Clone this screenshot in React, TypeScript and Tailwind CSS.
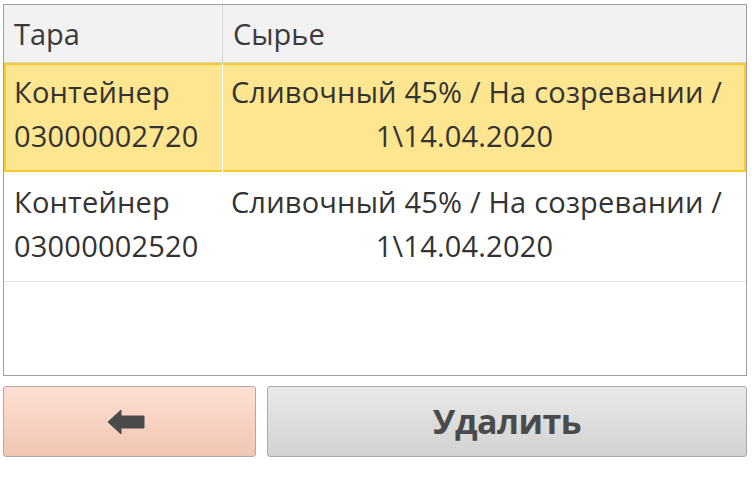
export default function App() {
  const font = { fontFamily: '"Open Sans", "Noto Sans", sans-serif' };
  return (
    <div className="w-[752px] h-[483px] bg-white pl-[3px] pt-[4px] text-[#333333]" style={font}>
      {/* Table */}
      <div className="w-[744px] h-[372px] border border-[#a0a0a0] flex flex-col">
        <div className="h-[58px] bg-[#f2f2f2] border-b border-[#d6d6d6] flex text-[29px] leading-[44px] text-[#3a3a3a]">
          <div className="w-[219px] border-r border-[#d6d6d6] pl-[10px] flex items-center">Тара</div>
          <div className="flex-1 pl-[10px] flex items-center">Сырье</div>
        </div>

        <div className="h-[109px] bg-[#fee58f] shadow-[inset_0_0_0_2px_#f8cb2c] flex text-[29px] leading-[44px] tracking-[0.2px]">
          <div className="w-[219px] border-r border-white pl-[10px] pt-[7px]">
            <div>Контейнер</div>
            <div>03000002720</div>
          </div>
          <div className="flex-1 pt-[7px] pr-[16px] text-center">
            <div>Сливочный 45% / На созревании /</div>
            <div className="pr-[24px]">1\14.04.2020</div>
          </div>
        </div>

        <div className="h-[110px] border-b border-[#e4e4e4] flex text-[29px] leading-[44px] tracking-[0.2px]">
          <div className="w-[219px] pl-[10px] pt-[8px]">
            <div>Контейнер</div>
            <div>03000002520</div>
          </div>
          <div className="flex-1 pt-[8px] pr-[16px] text-center">
            <div>Сливочный 45% / На созревании /</div>
            <div className="pr-[24px]">1\14.04.2020</div>
          </div>
        </div>
      </div>

      {/* Buttons */}
      <div className="mt-[10px] flex gap-[11px] w-[744px]">
        <button className="w-[253px] h-[71px] rounded-[3px] border border-[#aaaaaa] bg-gradient-to-b from-[#fee0d3] to-[#f1c5b3] flex items-center justify-center">
          <svg width="38" height="26" viewBox="0 0 38 26" className="mr-[8px]">
            <path d="M1 13 L14 1 L14 7 L37 7 L37 19 L14 19 L14 25 Z" fill="#4a4a4a" strokeLinejoin="round" stroke="#4a4a4a" strokeWidth="1" />
          </svg>
        </button>
        <button className="w-[480px] h-[71px] rounded-[3px] border border-[#aaaaaa] bg-gradient-to-b from-[#e9e9e9] to-[#d2d2d2] flex items-center justify-center text-[34px] tracking-[-0.5px] font-bold text-[#4a4a4a]">
          Удалить
        </button>
      </div>
    </div>
  );
}
